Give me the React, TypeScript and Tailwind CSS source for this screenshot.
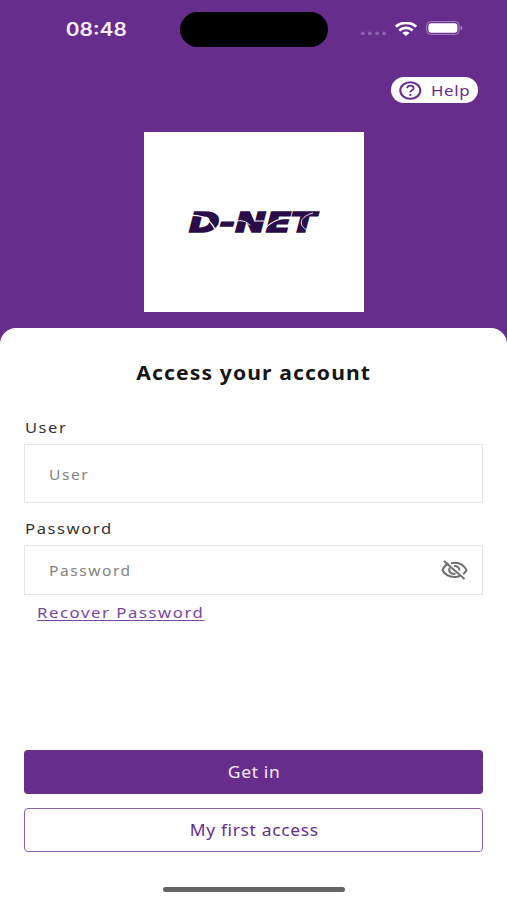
import clsx from 'clsx';
import type { ReactNode } from 'react';

const Wide = ({ className, children }: { className?: string; children: ReactNode }) => (
  <span className={clsx('inline-block whitespace-nowrap', className)}>{children}</span>
);

const Wifi = () => (
  <svg width="22" height="14" viewBox="0 0 22 14" className="ml-2 mt-px">
    <g fill="none" stroke="#fff" strokeWidth="2.7">
      <path d="M0.8 4.7C6.6-0.4 15.4-0.4 21.2 4.7" />
      <path d="M4.3 8.4C8.2 5 13.8 5 17.7 8.4" />
    </g>
    <path d="M7.4 10.9c2.2-1.8 5-1.8 7.2 0L11 14z" fill="#fff" />
  </svg>
);

const Battery = () => (
  <svg width="38" height="14" viewBox="0 0 38 14" className="ml-[9px]">
    <rect x="0.6" y="0.6" width="32.6" height="12.8" rx="4" fill="none" stroke="#a687bf" strokeWidth="1" />
    <rect x="2.4" y="2.2" width="29" height="9.6" rx="2.8" fill="#fff" />
    <path d="M34.6 4.8c2.4.8 2.4 3.6 0 4.4z" fill="#a687bf" />
  </svg>
);

const StatusBar = () => (
  <div className="flex h-[59px] items-start">
    <div className="flex w-[180px] justify-center pt-5 pl-3 font-['Inter'] text-[18px] leading-5 font-semibold text-[#faeeff]">
      <Wide className="scale-x-[1.16]">08:48</Wide>
    </div>
    <div className="mt-3 h-[35px] w-[148px] rounded-full bg-black" />
    <div className="mt-[21px] flex h-[14px] pl-8">
      <svg width="27" height="14" viewBox="0 0 27 14" fill="#8f62b0">
        <circle cx="2.8" cy="12.5" r="1.9" />
        <circle cx="9.9" cy="12.5" r="1.9" />
        <circle cx="17" cy="12.5" r="1.9" />
        <circle cx="24.1" cy="12.5" r="1.9" />
      </svg>
      <Wifi />
      <Battery />
    </div>
  </div>
);

const Logo = () => (
  <svg width="144" height="40" viewBox="-6 -8.5 144 40">
    <text
      x="1"
      y="21"
      textLength="127"
      lengthAdjust="spacingAndGlyphs"
      fill="#2a0d48"
      stroke="#2a0d48"
      strokeWidth="1.6"
      fontFamily="DejaVu Sans, sans-serif"
      fontWeight="bold"
      fontStyle="italic"
      fontSize="26"
    >
      D-NET
    </text>
    <g fill="none" stroke="#fff">
      <path d="M2 5C13 4 22 8 27 19" strokeWidth="1.4" />
      <path d="M46 11C54 9 59 11 62 15M67 10.5h9" strokeWidth="1" />
      <path d="M75 21.5C80 13 88 8 101 7.5" strokeWidth="1.2" />
      <path d="M118 19C110 14 112 6 125 2.5" strokeWidth="0.9" />
    </g>
  </svg>
);

const EyeOff = () => (
  <svg width="27" height="20" viewBox="0 0 27 20" fill="none" stroke="#6f6f6f" strokeWidth="2">
    <path d="M7.5 3.5C4.5 5 2.5 7.5 1.5 10C4 15 8.5 17 13.5 17c2 0 3.7-.3 5.2-1" />
    <path d="M10 3.2C17 1.5 22.5 4.5 25.5 10c-.8 1.7-1.9 3-3.3 4.1" />
    <path d="M8.8 7.8c-2 4 1.2 6.7 5.7 6" />
    <path d="M13 6c3.5-.2 5.7 1.7 5.4 4.6" />
    <path d="M3 1l20.5 18" />
  </svg>
);

export default () => (
  <div className="flex h-[900px] w-[507px] flex-col overflow-hidden bg-[#672d8d] font-['Noto_Sans',sans-serif]">
    <StatusBar />
    <div className="flex justify-end pt-[18px] pr-[29px]">
      <button className="flex h-[26px] w-[87px] items-center rounded-full bg-white pl-2 text-[#672d8d]">
        <svg width="23" height="19" viewBox="0 0 23 19" fill="none" stroke="currentColor" strokeWidth="2">
          <ellipse cx="11.3" cy="9.5" rx="10" ry="8.3" />
          <path d="M8.2 7.2c0-3.5 6.4-3.5 6.4 0 0 2-3.2 2.1-3.2 4.2M11.4 13v2" strokeWidth="1.8" />
        </svg>
        <Wide className="ml-[9px] origin-left scale-x-[1.12] text-[15px] tracking-[0.6px]">Help</Wide>
      </button>
    </div>
    <div className="mt-[29px] flex h-[180px] w-[220px] shrink-0 items-center justify-center self-center bg-white">
      <Logo />
    </div>
    <main className="mt-4 flex flex-1 flex-col rounded-t-[16px] bg-white px-6">
      <h1 className="mt-[31px] pl-px text-center text-[19px] leading-7 font-bold text-[#151515]">
        <Wide className="scale-x-[1.11] tracking-[1px]">Access your account</Wide>
      </h1>
      <label className="mt-[29px] pl-px text-[15px] leading-[22px] text-[#333]">
        <Wide className="origin-left scale-x-[1.1] tracking-[1.4px]">User</Wide>
      </label>
      <div className="mt-[6px] flex h-[59px] items-center border border-[#e7e7e7] pt-px pl-6 text-[14px] text-[#828282]">
        <Wide className="origin-left scale-x-[1.11] tracking-[1.4px]">User</Wide>
      </div>
      <label className="mt-[14px] pl-px text-[15px] leading-[22px] text-[#333]">
        <Wide className="origin-left scale-x-[1.11] tracking-[1.4px]">Password</Wide>
      </label>
      <div className="mt-[6px] flex h-[50px] items-center justify-between border border-[#e7e7e7] pr-[14px] pl-6 text-[14px] text-[#828282]">
        <Wide className="origin-left scale-x-[1.11] tracking-[1.4px]">Password</Wide>
        <EyeOff />
      </div>
      <a className="mt-[6px] ml-[13px] text-[15px] leading-[22px] text-[#7946a0]">
        <Wide className="origin-left scale-x-[1.115] tracking-[1.4px] underline underline-offset-2">Recover Password</Wide>
      </a>
      <div className="mt-auto flex flex-col gap-[14px]">
        <button className="h-[44px] rounded bg-[#672d8d] pl-0.5 text-[16px] text-[#f7e9ff]">
          <Wide className="scale-x-[1.09] tracking-[0.6px]">Get in</Wide>
        </button>
        <button className="h-[44px] rounded border border-[#925fae] pl-0.5 text-[16px] text-[#672d8d]">
          <Wide className="scale-x-[1.09] tracking-[0.6px]">My first access</Wide>
        </button>
      </div>
      <div className="mt-[35px] mb-2 h-[5px] w-[182px] self-center rounded-full bg-[#656565]" />
    </main>
  </div>
);
